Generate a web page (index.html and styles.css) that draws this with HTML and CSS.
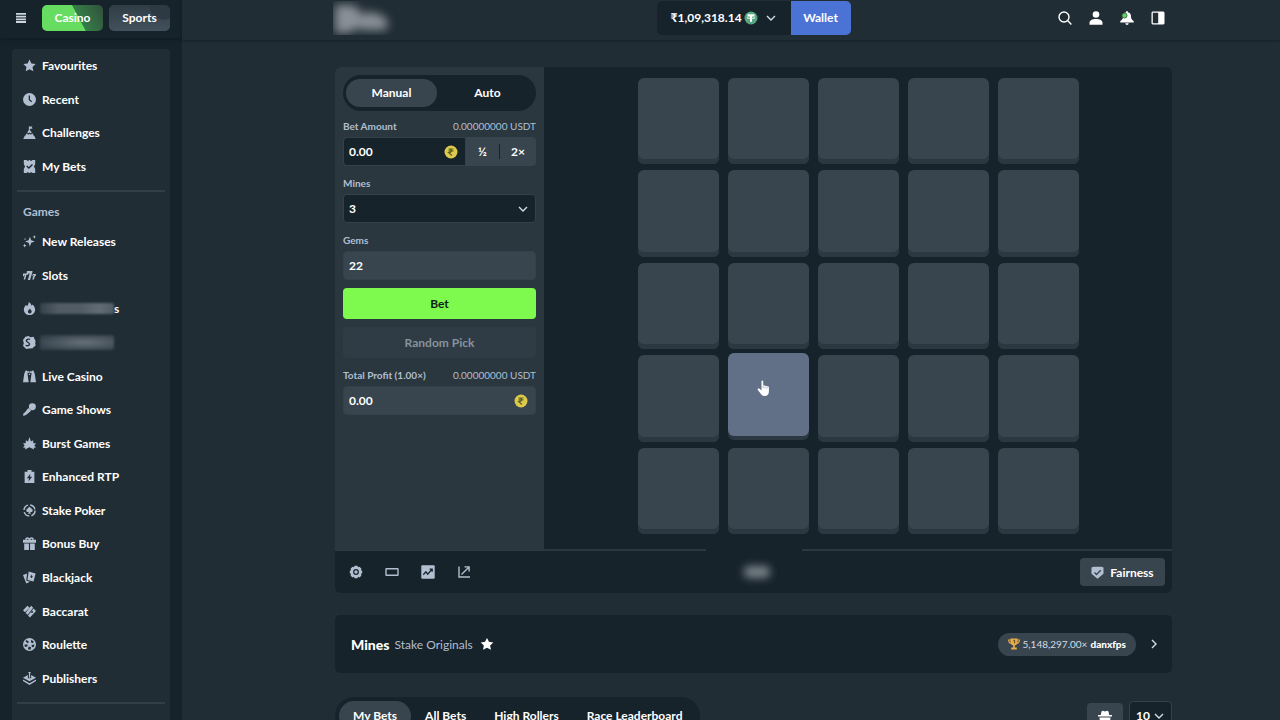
FILE: index.html
```html
<!DOCTYPE html>
<html lang="en">
<head>
    <meta charset="UTF-8">
    <meta name="viewport" content="width=device-width, initial-scale=1.0">
    <title>Mines</title>
    <link rel="stylesheet" href="styles.css">
</head>
<body>
<div class="layout">

    <aside class="sidebar">
        <div class="sidebar-top">
            <button type="button" class="icon-btn menu-btn" aria-label="Menu">
                <svg viewBox="0 0 10 10" width="10" height="10"><path d="M0 0h10v1.800H0zM0 2.700h10v1.800H0zM0 5.400h10v1.800H0zM0 8.100h10v1.800H0z"/></svg>
            </button>
            <a href="#" class="mode mode-casino">Casino</a>
            <a href="#" class="mode mode-sports">Sports</a>
        </div>

        <nav class="side-card">
            <ul class="side-list side-list-main">
                <li><a href="#"><svg viewBox="0 0 16 16"><path d="M8 .5l2.300 4.900 5.200.7-3.800 3.700 1 5.400L8 12.600l-4.700 2.600 1-5.400L.5 6.100l5.200-.7z"/></svg>Favourites</a></li>
                <li><a href="#"><svg viewBox="0 0 16 16"><path fill-rule="evenodd" d="M8 0a8 8 0 1 1 0 16A8 8 0 0 1 8 0zM7 3v5.600l3.200 2.700 1-1.200-2.600-2.200V3z"/></svg>Recent</a></li>
                <li><a href="#"><svg viewBox="0 0 16 16"><path d="M7.200 5V.5h4.600l-1 1.400 1 1.400H8.500V5l2.300 3-1.300 1-1.500-1-1.600 1-1.200-1zM4.500 9l1.900 1.700L8 9.600l1.600 1.100L11.500 9l1.700 3H2.800zM2.200 12h11.600L15.700 16H.3z"/></svg>Challenges</a></li>
                <li><a href="#"><svg viewBox="0 0 16 16"><path fill-rule="evenodd" d="M1 0h3.500a1.600 1.600 0 0 0 3 0h1a1.600 1.600 0 0 0 3 0H15v5l-1.500 3L15 11v5h-3.500a1.600 1.600 0 0 0-3 0h-1a1.600 1.600 0 0 0-3 0H1v-5l1.500-3L1 5zM5.200 6.800L4 8l3.200 3.200L12.300 6 11 4.800 7.200 8.700z"/></svg>My Bets</a></li>
            </ul>
            <hr>
            <h2>Games</h2>
            <ul class="side-list side-list-games">
                <li><a href="#"><svg viewBox="0 0 16 16"><path d="M8.500 2l1.600 4.400L14.500 8l-4.400 1.600L8.500 14l-1.600-4.400L2.500 8l4.400-1.600zM14 0l.7 1.700L16 2.300l-1.300.7L14 4.600 13.300 3l-1.500-.7 1.500-.6zM2 10.500l.7 1.800 1.700.7-1.700.7L2 15.500l-.7-1.800L0 13l1.300-.7zM2.500 4l1 1-1 1-1-1z"/></svg>New Releases</a></li>
                <li><a href="#"><svg viewBox="0 0 16 16"><path d="M4.800 2.500h7L11.300 5 8.700 13.500H5.900L8.200 5.600H6.600L6.300 7H4.200zM0 5.500h4.700L4.300 7.200 2.700 13H.8l1.400-5.200H1.400L1.200 9H-.3zM12 6h4.300L16 7.700 14.300 9.400 13.500 13h-2l1-4 1.200-1.200H12L11.700 9h-.6z"/></svg>Slots</a></li>
                <li><a href="#"><svg viewBox="0 0 16 16"><path fill-rule="evenodd" d="M7 0c2 1 3 2.600 3.500 4.500L12 3c2 2.500 3 4.500 3 6.800A6.700 6.700 0 0 1 8 16a6.700 6.700 0 0 1-7-6.200C1 7 2.500 5.500 3.500 3.800L5 5C6.500 3.500 7 2 7 0zm1.500 8C7.300 9.700 6 10.400 6 11.900A2.300 2.300 0 0 0 8.300 14a2.300 2.300 0 0 0 2.400-2.100C10.700 10.400 9.500 9.700 8.500 8z"/></svg><span class="hidden-name"></span><span class="hidden-tail">s</span></a></li>
                <li><a href="#" aria-label="Originals"><svg viewBox="0 0 16 16"><path fill-rule="evenodd" d="M3 1l4-1 2 1.500L13 1l1 2.500L15.500 6 15 9l.5 3-2.500 1.500L12 15l-4 .5L4 16l-2-2L0 12l1-3L0 5zM8.700 3.500C5.500 2.500 3 4 3.400 6.200c.4 2 3.800 2.200 3.700 4 0 1.200-1.800 1.200-3.600.5L3 12.400c3 1 5.900 0 5.800-2.700-.1-2.300-3.500-2.400-3.600-4 0-1 1.400-1.300 3-.6z"/></svg><span class="hidden-name tall"></span></a></li>
                <li><a href="#"><svg viewBox="0 0 16 16"><path d="M3 1l2-.5L7 15H0L1.500 5zM13 1l-2-.5L9 15h7L14.500 5zM5.500 1L8 2l2.500-1v3L8 3.200 5.500 4zM7.300 4.500h1.400V6H7.300z"/></svg>Live Casino</a></li>
                <li><a href="#"><svg viewBox="0 0 16 16"><circle cx="11.500" cy="4.500" r="4.300"/><path d="M6.500 6l3.500 3.500L4.500 14 2.300 15.500 0 15.700.5 13 2.500 11.300z"/></svg>Game Shows</a></li>
                <li><a href="#"><svg viewBox="0 0 16 16"><path d="M8 0l1.800 5.500L12.500 4l.2 3.600 3.300.2-2 2.700L16 13l-2.800.2.3 2.300-3-1.700L8 12.500l-2.500 1.300-3 1.700.3-2.300L0 13l2-2.500L0 7.800l3.300-.2L3.500 4l2.700 1.500z"/></svg>Burst Games</a></li>
                <li><a href="#"><svg viewBox="0 0 16 16"><path fill-rule="evenodd" d="M5.500 0h5v2H14v14H2V2h3.500zM9 4.500L4.800 10h2.600L6.800 14 11.200 8.300H8.500z"/></svg>Enhanced RTP</a></li>
                <li><a href="#"><svg viewBox="0 0 16 16"><circle class="ring" cx="8" cy="8" r="6.800"/><path d="M8 3.300c1.500 1.700 4 2.700 4 4.700a2 2 0 0 1-3.200 1.500l.9 2.500H6.300l.9-2.500A2 2 0 0 1 4 8c0-2 2.500-3 4-4.700z"/></svg>Stake Poker</a></li>
                <li><a href="#"><svg viewBox="0 0 16 16"><path fill-rule="evenodd" d="M0 3.500h3C2 1 5.500-1 8 1.500 10.500-1 14 1 13 3.500h3V7H0zm4.500 0h2.700C6 1.500 4.500 2 4.500 3.500zm4.300 0h2.700c0-1.500-1.500-2-2.700 0zM1.500 8h5.800v8H1.500zm7.200 0h5.800v8H8.700z"/></svg>Bonus Buy</a></li>
                <li><a href="#"><svg viewBox="0 0 16 16"><path fill-rule="evenodd" d="M7 .5L15.500 3 13 13 5.500 11zM10.500 4.500L9 7l1.200 1.800L12 7zM0 5l5-1.800-1 8.500 4.600 1.400L4 15.500z"/></svg>Blackjack</a></li>
                <li><a href="#"><svg viewBox="0 0 16 16"><path fill-rule="evenodd" d="M5.500 1L8 3.500 2.500 9 0 6.500zM10 1l2.500 2.500L5.700 12 3.200 9.700zM13 4.300L16 7.500 8.500 15.500 6.200 12.900zM12.500 7.500l-2 .3-.5 2 2-.3z"/></svg>Baccarat</a></li>
                <li><a href="#"><svg viewBox="0 0 16 16"><path fill-rule="evenodd" d="M8 0a8 8 0 1 1 0 16A8 8 0 0 1 8 0zM4.500 2.500L3 4l2.500 2.500L7.500 5zM10.500 2L9.500 5l2 1.500L13.500 5zM1.800 8l.5 3 3-.5.5-2.500zM14.200 8L10.500 8.500l.5 3 2.300-.5zM7 10.500L6 14h3.500l.5-2.700z"/></svg>Roulette</a></li>
                <li><a href="#"><svg viewBox="0 0 16 16"><path d="M7.300 1.500a1.300 1.300 0 1 1 1.500 0V7H7.300zM6 3.800v4h4v-4L16 7 8 11.500 0 7zM0 9.200l8 4.500 8-4.500v2L8 16l-8-4.800z"/></svg>Publishers</a></li>
            </ul>
            <hr>
        </nav>
    </aside>

    <div class="page">
        <header class="topbar">
            <a href="#" class="logo" aria-label="Home">
                <svg class="logo-mark" viewBox="0 0 62 34" width="62" height="34"><path d="M2 4h12c10 0 14 4 13 10l9-3 9 2 6 3 4 4-2 9H30l-6-2-8 5H2z"/></svg>
            </a>

            <div class="wallet">
                <button type="button" class="balance">
                    <span>₹1,09,318.14</span>
                    <svg viewBox="0 0 14 14" width="14" height="14"><circle cx="7" cy="7" r="6.500" fill="#57a581"/><path d="M3.500 3.300h7v1.900H8v5.500H6V5.200H3.500z" fill="#fff"/><ellipse cx="7" cy="6.700" rx="4" ry="1" fill="none" stroke="#fff" stroke-width=".7"/></svg>
                    <svg class="chevron" viewBox="0 0 10 10" width="10" height="10"><path d="M1 3l4 4 4-4"/></svg>
                </button>
                <button type="button" class="wallet-btn">Wallet</button>
            </div>

            <div class="top-icons">
                <button type="button" class="icon-btn" aria-label="Search"><svg viewBox="0 0 14 14" width="14" height="14"><circle class="line" cx="6" cy="6" r="5"/><path class="line" d="M9.800 9.800l3.600 3.600"/></svg></button>
                <button type="button" class="icon-btn" aria-label="Profile"><svg viewBox="0 0 14 14" width="14" height="14"><circle cx="7" cy="3.500" r="3.300"/><path d="M.5 13.800V12C.5 9.500 3 8 7 8s6.500 1.500 6.500 4v1.800z"/></svg></button>
                <button type="button" class="icon-btn" aria-label="Notifications"><svg viewBox="0 0 14 14" width="14" height="14"><path d="M6.300 0h1.400v1.200c2.500.5 3.300 2.300 3.300 4.300 0 2.500 1 3.500 2.700 4.500v1.500H.3V10C2 9 3 8 3 5.500c0-2 .8-3.800 3.300-4.300zM5.300 12.200h3.400a1.700 1.700 0 0 1-3.400 0z"/><circle cx="4.500" cy="4.500" r="2.600" fill="#5fd35b" stroke="#212d35" stroke-width=".6"/></svg></button>
                <button type="button" class="icon-btn" aria-label="Chat panel"><svg viewBox="0 0 14 14" width="14" height="14"><path fill-rule="evenodd" d="M1.500.5h11l1 1v11l-1 1h-11l-1-1v-11zM1.800 1.800v10.400h5.400V1.800z"/></svg></button>
            </div>
        </header>

        <main class="content">
            <section class="game">
                <div class="game-body">
                    <form class="controls">
                        <div class="pill-tabs">
                            <button type="button" class="active">Manual</button>
                            <button type="button">Auto</button>
                        </div>

                        <div class="field">
                            <div class="label-row"><label for="amount">Bet Amount</label><span>0.00000000 USDT</span></div>
                            <div class="amount-row">
                                <div class="input-wrap">
                                    <input type="text" id="amount" value="0.00">
                                    <svg class="coin" viewBox="0 0 14 14" width="14" height="14"><circle cx="7" cy="7" r="6.500"/><path d="M4.500 4h5M4.500 5.800h5M4.700 4c3.800 0 3.800 3.500 0 3.500l3.200 3"/></svg>
                                </div>
                                <button type="button" class="half">½</button>
                                <button type="button" class="double">2×</button>
                            </div>
                        </div>

                        <div class="field">
                            <div class="label-row"><label for="mines">Mines</label></div>
                            <div class="input-wrap">
                                <select id="mines"><option>3</option><option>5</option><option>10</option></select>
                                <svg class="chevron" viewBox="0 0 10 10" width="10" height="10"><path d="M1 3l4 4 4-4"/></svg>
                            </div>
                        </div>

                        <div class="field">
                            <div class="label-row"><label for="gems">Gems</label></div>
                            <input type="text" id="gems" class="readonly" value="22" readonly>
                        </div>

                        <button type="button" class="action bet">Bet</button>
                        <button type="button" class="action random" disabled>Random Pick</button>

                        <div class="field">
                            <div class="label-row"><label for="profit">Total Profit (1.00×)</label><span>0.00000000 USDT</span></div>
                            <div class="input-wrap">
                                <input type="text" id="profit" class="readonly" value="0.00" readonly>
                                <svg class="coin" viewBox="0 0 14 14" width="14" height="14"><circle cx="7" cy="7" r="6.500"/><path d="M4.500 4h5M4.500 5.800h5M4.700 4c3.800 0 3.800 3.500 0 3.500l3.200 3"/></svg>
                            </div>
                        </div>
                    </form>

                    <div class="board">
                        <div class="tiles">
                            <button type="button" class="tile" aria-label="Tile 1"></button>
                            <button type="button" class="tile" aria-label="Tile 2"></button>
                            <button type="button" class="tile" aria-label="Tile 3"></button>
                            <button type="button" class="tile" aria-label="Tile 4"></button>
                            <button type="button" class="tile" aria-label="Tile 5"></button>
                            <button type="button" class="tile" aria-label="Tile 6"></button>
                            <button type="button" class="tile" aria-label="Tile 7"></button>
                            <button type="button" class="tile" aria-label="Tile 8"></button>
                            <button type="button" class="tile" aria-label="Tile 9"></button>
                            <button type="button" class="tile" aria-label="Tile 10"></button>
                            <button type="button" class="tile" aria-label="Tile 11"></button>
                            <button type="button" class="tile" aria-label="Tile 12"></button>
                            <button type="button" class="tile" aria-label="Tile 13"></button>
                            <button type="button" class="tile" aria-label="Tile 14"></button>
                            <button type="button" class="tile" aria-label="Tile 15"></button>
                            <button type="button" class="tile" aria-label="Tile 16"></button>
                            <button type="button" class="tile hovered" aria-label="Tile 17">
                                <svg class="pointer" viewBox="0 0 14 17" width="14" height="17"><path d="M4.500 1.300c0-1.100 1.700-1.100 1.700 0v4.500c.4-.7 1.700-.6 1.900.3.500-.6 1.700-.4 1.900.5.600-.5 1.900-.2 1.900.9v4c0 2.800-1.500 4.500-4.200 4.500-2.400 0-3.300-1-4.300-2.700L.8 9.900c-.7-1.200.8-2 1.700-1.100l2 1.800z"/><path d="M6.200 6v2.200M8.100 6.500v1.900M10 7v1.600" stroke="#68748c" stroke-width=".5"/></svg>
                            </button>
                            <button type="button" class="tile" aria-label="Tile 18"></button>
                            <button type="button" class="tile" aria-label="Tile 19"></button>
                            <button type="button" class="tile" aria-label="Tile 20"></button>
                            <button type="button" class="tile" aria-label="Tile 21"></button>
                            <button type="button" class="tile" aria-label="Tile 22"></button>
                            <button type="button" class="tile" aria-label="Tile 23"></button>
                            <button type="button" class="tile" aria-label="Tile 24"></button>
                            <button type="button" class="tile" aria-label="Tile 25"></button>
                        </div>
                    </div>
                </div>

                <div class="game-footer">
                    <div class="tools">
                        <button type="button" class="icon-btn" aria-label="Settings"><svg viewBox="0 0 14 14" width="14" height="14"><path fill-rule="evenodd" d="M5.500.8h3l.5 1.400 1.500-.5 2 2-.6 1.500 1.300.5v2.600l-1.300.6.6 1.500-2 2-1.500-.6-.5 1.400h-3L5 11.800l-1.500.6-2-2 .6-1.500L.8 8.300V5.700l1.300-.5-.6-1.500 2-2 1.500.5zM7 4.100a2.900 2.900 0 1 0 0 5.800 2.900 2.900 0 0 0 0-5.800zM7 5.300a1.700 1.700 0 1 1 0 3.400 1.700 1.700 0 0 1 0-3.400z"/></svg></button>
                        <button type="button" class="icon-btn" aria-label="Theatre mode"><svg viewBox="0 0 14 14" width="14" height="14"><rect class="line" x="1" y="3.700" width="12" height="6.600" rx=".5"/></svg></button>
                        <button type="button" class="icon-btn" aria-label="Live stats"><svg viewBox="0 0 14 14" width="14" height="14"><rect x=".3" y=".3" width="13.400" height="13.400" rx="1"/><path d="M2.300 9.700l2.600-3 1.800 2.500L11 4.300M8.600 4.100h2.600v2.600" fill="none" stroke="#17232b" stroke-width="1.300"/></svg></button>
                        <button type="button" class="icon-btn" aria-label="Open"><svg viewBox="0 0 14 14" width="14" height="14"><path class="line" d="M2 1.500V12h11M4.500 9.500l7.500-7.500M7.500 1.900h4.600v4.600"/></svg></button>
                    </div>
                    <span class="brand-blur"></span>
                    <button type="button" class="fairness"><svg viewBox="0 0 13 13" width="13" height="13"><path fill="#b1bfd0" d="M.5 1.500L2.500.7h8l2 .8v6.200L6.500 12.700.5 7.700z"/><path d="M3.500 6.500l2 2 4.200-4.300" fill="none" stroke="#38454e" stroke-width="1.400"/></svg>Fairness</button>
                </div>
            </section>

            <section class="info">
                <h1>Mines</h1>
                <a href="#" class="provider">Stake Originals</a>
                <button type="button" class="icon-btn star" aria-label="Add to favourites"><svg viewBox="0 0 16 16" width="14" height="14"><path d="M8 1l2.200 4.500 5 .7-3.600 3.500.9 5L8 12.300l-4.500 2.400.9-5L.8 6.200l5-.7z"/></svg></button>
                <a href="#" class="record">
                    <svg viewBox="0 0 12 12" width="12" height="12"><path fill="#e6ac4b" fill-rule="evenodd" d="M2.500.5h7v1H12c0 2.700-1 4-3 4.400-.6.8-1.300 1.300-2.200 1.500v2h2v2H3.200v-2h2v-2C4.300 7.200 3.600 6.700 3 5.900 1 5.500 0 4.200 0 1.500h2.500zM1.200 2.600c.1 1 .6 1.700 1.300 2V2.600zm8.300 0v2c.7-.3 1.200-1 1.300-2z"/><path d="M5.300 2.300h1.300v3" fill="none" stroke="#5a4222"/></svg>
                    <span>5,148,297.00×</span><strong>danxfps</strong>
                </a>
                <button type="button" class="icon-btn next" aria-label="Expand"><svg class="chevron" viewBox="0 0 10 10" width="10" height="10"><path d="M3 1l4 4-4 4"/></svg></button>
            </section>

            <section class="bets">
                <div class="bet-tabs">
                    <button type="button" class="active">My Bets</button>
                    <button type="button">All Bets</button>
                    <button type="button">High Rollers</button>
                    <button type="button">Race Leaderboard</button>
                </div>
                <button type="button" class="ghost-btn" aria-label="Ghost mode"><svg viewBox="0 0 14 14" width="14" height="14"><path fill-rule="evenodd" d="M3.500 1.500L5 .7l2 .7 2-.7 1.500.8.7 3.500H14v1.500H0V5h2.800zM1.500 7.500h11L12 12H9L7.500 10h-1L5 12H2z"/></svg></button>
                <div class="input-wrap rows">
                    <select aria-label="Rows"><option>10</option><option>20</option></select>
                    <svg class="chevron" viewBox="0 0 10 10" width="10" height="10"><path d="M1 3l4 4 4-4"/></svg>
                </div>
            </section>
        </main>
    </div>

</div>
</body>
</html>
```
FILE: styles.css
```css
:root {
    --page: #212d35;
    --dark: #17232b;
    --panel: #2a373f;
    --raised: #38454e;
    --line: #2b3840;
    --muted: #b1bfd0;
}

* {
    box-sizing: border-box;
}

body {
    margin: 0;
    font-family: Lato, "Liberation Sans", sans-serif;
    font-size: 12px;
    font-weight: 700;
    color: #fff;
    background-color: var(--page);
}

a {
    color: inherit;
    text-decoration: none;
}

button, input, select {
    font: inherit;
    color: inherit;
    border: 0;
    margin: 0;
    padding: 0;
    background: none;
}

svg {
    display: block;
    flex: none;
    fill: currentColor;
}

.line, .chevron {
    fill: none;
    stroke: currentColor;
    stroke-width: 1.4;
}

.chevron {
    color: #d3dbe3;
}

.icon-btn {
    display: flex;
    align-items: center;
    justify-content: center;
}

.layout {
    display: grid;
    grid-template-columns: 182px 1fr;
    height: 100vh;
    overflow: hidden;
}

/* Sidebar */
.sidebar {
    background-color: var(--dark);
    overflow: hidden;
}

.sidebar-top {
    display: flex;
    align-items: center;
    height: 38px;
    padding: 0 12px 3px 16px;
    box-shadow: 0 2px 4px rgba(0, 0, 0, 0.25);
}

.menu-btn {
    width: 10px;
    margin-right: 16px;
    color: #cbd5df;
}

.mode {
    width: 61px;
    height: 26px;
    margin-right: 6px;
    border-radius: 5px;
    line-height: 25px;
    text-align: center;
}

.mode-casino {
    background: linear-gradient(62deg, #66dc60 0 58%, #347e47 59%, #32503c);
}

.mode-sports {
    margin-right: 0;
    background: radial-gradient(circle at 90% 0, #2d3943 14px, transparent 15px), linear-gradient(#303d47, #43515c);
}

.side-card {
    height: 100%;
    margin: 11px 12px 0;
    border-radius: 4px;
    background-color: var(--page);
}

.side-card hr {
    height: 2px;
    margin: 7px 5px 6px;
    border: 0;
    background-color: #303e47;
}

.side-card h2 {
    margin: 0;
    padding-left: 11px;
    font-size: 12px;
    line-height: 27px;
    color: var(--muted);
}

.side-list {
    display: grid;
    grid-auto-rows: 1fr;
    margin: 0;
    padding: 0;
    list-style: none;
}

.side-list-main {
    height: 134px;
}

.side-list-games {
    height: 470px;
}

.side-list a {
    display: flex;
    align-items: center;
    height: 100%;
    padding-left: 11px;
}

.side-list svg {
    width: 13px;
    height: 13px;
    margin-right: 6px;
    color: var(--muted);
}

.ring {
    fill: none;
    stroke: currentColor;
    stroke-width: 1.8;
    stroke-dasharray: 8 2.7;
}

.hidden-name {
    width: 74px;
    height: 11px;
    margin-left: -2px;
    border-radius: 2px;
    background: linear-gradient(90deg, #36424b, #515c65 25% 55%, #616c74 80%, #525d66);
    filter: blur(1px);
}

.tall {
    height: 15px;
    background: radial-gradient(ellipse 70% 60% at 60% 50%, #66717a, #35414a);
}

/* Top bar */
.topbar {
    display: grid;
    grid-template-columns: 1fr auto 1fr;
    align-items: center;
    height: 40px;
    padding: 0 115px 5px 151px;
    box-shadow: 0 1px 3px rgba(0, 0, 0, 0.3);
}

.logo {
    width: 64px;
    height: 34px;
    overflow: hidden;
}

.logo-mark {
    color: #8a9097;
    filter: blur(5px);
}

.wallet {
    display: flex;
    height: 34px;
    margin-left: 9px;
}

.balance {
    display: flex;
    align-items: center;
    gap: 4px;
    width: 134px;
    padding-left: 14px;
    border-radius: 5px 0 0 5px;
    background-color: var(--dark);
}

.balance svg {
    margin-left: -2px;
}

.balance .chevron {
    margin-left: 4px;
}

.wallet-btn {
    width: 60px;
    border-radius: 0 5px 5px 0;
    background-color: #4b73d5;
}

.top-icons {
    display: flex;
    justify-content: flex-end;
    gap: 17px;
}

/* Game */
.content {
    padding: 27px 108px 0 153px;
}

.game {
    border-radius: 6px;
    background-color: var(--dark);
    overflow: hidden;
}

.game-body {
    display: grid;
    grid-template-columns: 209px 1fr;
}

/* divider with a gap above the brand */
.game-body::after {
    content: "";
    grid-column: 1 / -1;
    height: 2px;
    background: linear-gradient(90deg, var(--line) 0 calc(50% - 48px), var(--dark) 0 calc(50% + 48px), var(--line) 0);
}

.controls {
    padding: 8px;
    background-color: var(--panel);
}

.pill-tabs {
    display: flex;
    gap: 5px;
    height: 36px;
    padding: 4px 3px;
    border-radius: 18px;
    background-color: var(--dark);
}

.pill-tabs button {
    flex: 1;
    padding-bottom: 1px;
    border-radius: 14px;
}

.pill-tabs .active, .bet-tabs .active {
    background-color: var(--raised);
}

.label-row {
    display: flex;
    align-items: flex-end;
    justify-content: space-between;
    height: 28px;
    padding-bottom: 4px;
    font-size: 11px;
    line-height: 14px;
    color: var(--muted);
}

.label-row label {
    font-size: 10px;
}

.label-row span {
    font-size: 10px;
    font-weight: 400;
}

.pill-tabs + .field .label-row {
    height: 26px;
}

.input-wrap {
    display: grid;
    flex: 1;
    align-items: center;
}

.input-wrap > * {
    grid-area: 1 / 1;
}

.input-wrap svg {
    justify-self: end;
    margin-right: 8px;
    pointer-events: none;
}

.controls input, .controls select {
    display: block;
    width: 100%;
    height: 29px;
    padding-left: 5px;
    border: 1px solid #33414a;
    border-radius: 4px;
    background-color: var(--dark);
    appearance: none;
}

.controls .readonly {
    background-color: var(--raised);
}

.amount-row {
    display: flex;
    border-radius: 4px;
    background-color: var(--raised);
}

.amount-row input {
    border-radius: 4px 0 0 4px;
}

.half {
    width: 33px;
}

.double {
    width: 37px;
    height: 15px;
    align-self: center;
    border-left: 1px solid var(--dark);
}

.coin {
    fill: #dfc94c;
}

.coin path {
    fill: none;
    stroke: #5e6420;
    stroke-width: 1.2;
}

.action {
    display: block;
    width: 100%;
    height: 31px;
    margin-top: 8px;
    padding-bottom: 1px;
    border-radius: 4px;
}

.bet {
    background-color: #7ef94d;
    color: #10251a;
}

.random {
    background-color: #2f3c45;
    color: #87939d;
}

.board {
    padding: 11px 12px 15px;
}

.tiles {
    display: grid;
    grid-template-columns: repeat(5, 1fr);
    grid-auto-rows: 1fr;
    gap: 6px 9px;
    max-width: 441px;
    height: 456px;
    margin: 0 auto;
}

.tile {
    border-radius: 6px;
    background-color: var(--raised);
    box-shadow: inset 0 -5px #2b3841;
}

.hovered {
    display: grid;
    place-items: center;
    margin: -2px 0 6px;
    background-color: #617087;
    box-shadow: 0 4px #2b3841;
}

.pointer {
    margin: 0 9px 11px 0;
}

.game-footer {
    display: grid;
    grid-template-columns: 1fr auto 1fr;
    align-items: center;
    height: 42px;
    padding: 0 7px 0 14px;
}

.tools {
    display: flex;
    gap: 22px;
    color: var(--muted);
}

.brand-blur {
    width: 26px;
    height: 12px;
    border-radius: 5px;
    background-color: #79838a;
    filter: blur(4px);
}

.fairness {
    display: flex;
    align-items: center;
    justify-content: center;
    justify-self: end;
    gap: 6px;
    width: 85px;
    height: 28px;
    border-radius: 4px;
    background-color: var(--raised);
}

/* Game info */
.info {
    display: flex;
    align-items: center;
    height: 58px;
    margin-top: 22px;
    padding: 0 13px 0 16px;
    border-radius: 5px;
    background-color: var(--dark);
}

.info h1 {
    margin: 0 5px 0 0;
    font-size: 14px;
    font-weight: 900;
}

.provider {
    color: var(--muted);
    font-weight: 400;
}

.star {
    margin-left: 7px;
}

.record {
    display: flex;
    align-items: center;
    gap: 3px;
    height: 23px;
    margin: 0 13px 0 auto;
    padding: 0 10px;
    border-radius: 12px;
    background-color: var(--raised);
    font-size: 10px;
}

.record span {
    color: #d3dbe3;
    font-weight: 400;
}

/* Bets */
.bets {
    display: flex;
    align-items: flex-start;
    margin-top: 24px;
}

.bet-tabs {
    display: flex;
    margin-right: auto;
    padding: 4px;
    border-radius: 19px;
    background-color: var(--dark);
}

.bet-tabs button {
    height: 30px;
    padding: 0 14px 2px;
    border-radius: 15px;
}

.ghost-btn {
    display: flex;
    align-items: center;
    justify-content: center;
    width: 36px;
    height: 28px;
    margin: 6px 6px 0 0;
    border-radius: 4px;
    background-color: var(--raised);
}

.rows {
    flex: none;
    width: 43px;
    margin-top: 4px;
}

.rows select {
    width: 100%;
    height: 30px;
    padding: 0 0 1px 6px;
    border: 1px solid #33414a;
    border-radius: 4px;
    background-color: var(--dark);
    appearance: none;
}
```
